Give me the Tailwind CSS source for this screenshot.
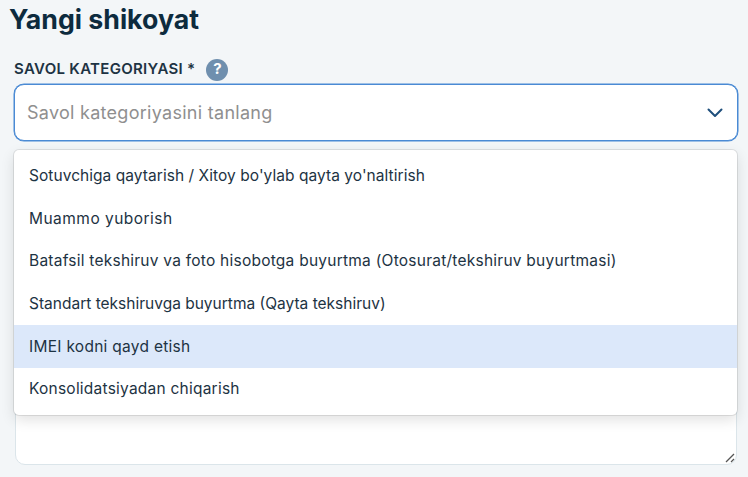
<!DOCTYPE html>
<html lang="uz">
<head>
    <meta charset="UTF-8">
    <meta name="viewport" content="width=device-width, initial-scale=1.0">
    <title>Yangi shikoyat</title>
    <script src="https://cdn.jsdelivr.net/npm/@tailwindcss/browser@4"></script>
</head>
<body class="bg-[#f3f6f8] font-['Inter',sans-serif] h-[477px] overflow-hidden">

    <div class="pl-[14px] pr-[10px]">
        <!-- Title -->
        <h1 class="-ml-[5px] h-[37px] pt-[2px] text-[26.7px] leading-[34px] font-bold text-[#0d2b3e]">Yangi shikoyat</h1>

        <!-- Label -->
        <div class="mt-[18px] h-[29px] flex items-center gap-[11px]">
            <span class="text-[15px] font-semibold text-[#1d3343] tracking-[0.3px]">SAVOL KATEGORIYASI *</span>
            <span class="w-[22px] h-[22px] rounded-full bg-[#6f8fae] text-white text-[15px] font-bold flex items-center justify-center">?</span>
        </div>

        <!-- Select -->
        <div class="h-[57px] bg-white border border-[#4a8ad4] shadow-[0_0_0_0.5px_#4a8ad4] rounded-[10px] flex items-center justify-between pl-[12px] pr-[14px]">
            <span class="text-[18px] text-[#8f8f8f] tracking-[0.28px]">Savol kategoriyasini tanlang</span>
            <svg class="w-[16px] h-[10px]" viewBox="0 0 16 10" fill="none" stroke="#1f4f7c" stroke-width="2" stroke-linecap="round" stroke-linejoin="round">
                <path d="M1.5 1.5 L8 8 L14.5 1.5"></path>
            </svg>
        </div>

        <!-- Textarea under the open dropdown -->
        <div class="relative mt-[9px]">
            <div class="h-[315px] mx-[1px] bg-white border border-[#dbe5ea] rounded-[10px] relative">
                <svg class="absolute right-[1px] bottom-[1px] w-[10px] h-[10px]" viewBox="0 0 10 10" fill="none" stroke="#555" stroke-width="1.2">
                    <path d="M1 9 L9 1"></path>
                    <path d="M6 9 L9 6"></path>
                </svg>
            </div>

            <!-- Dropdown -->
            <ul class="absolute top-0 left-0 right-[1px] h-[265px] bg-white rounded-[5px] overflow-hidden pt-[4.6px] text-[15.5px] text-[#1d3343] shadow-[0_0_0_1px_rgba(0,0,0,0.09),0_5px_14px_rgba(0,0,0,0.12)]">
                <li class="h-[42.6px] flex items-center pl-[15px] tracking-[0.05px]">Sotuvchiga qaytarish / Xitoy bo'ylab qayta yo'naltirish</li>
                <li class="h-[42.6px] flex items-center pl-[15px] tracking-[0.47px]">Muammo yuborish</li>
                <li class="h-[42.6px] flex items-center pl-[15px] tracking-[0.24px]">Batafsil tekshiruv va foto hisobotga buyurtma (Otosurat/tekshiruv buyurtmasi)</li>
                <li class="h-[42.6px] flex items-center pl-[15px]">Standart tekshiruvga buyurtma (Qayta tekshiruv)</li>
                <li class="h-[42.6px] flex items-center pl-[15px] bg-[#dce8fa] tracking-[0.28px]">IMEI kodni qayd etish</li>
                <li class="h-[42.6px] flex items-center pl-[15px] tracking-[0.23px]">Konsolidatsiyadan chiqarish</li>
            </ul>
        </div>
    </div>

</body>
</html>
